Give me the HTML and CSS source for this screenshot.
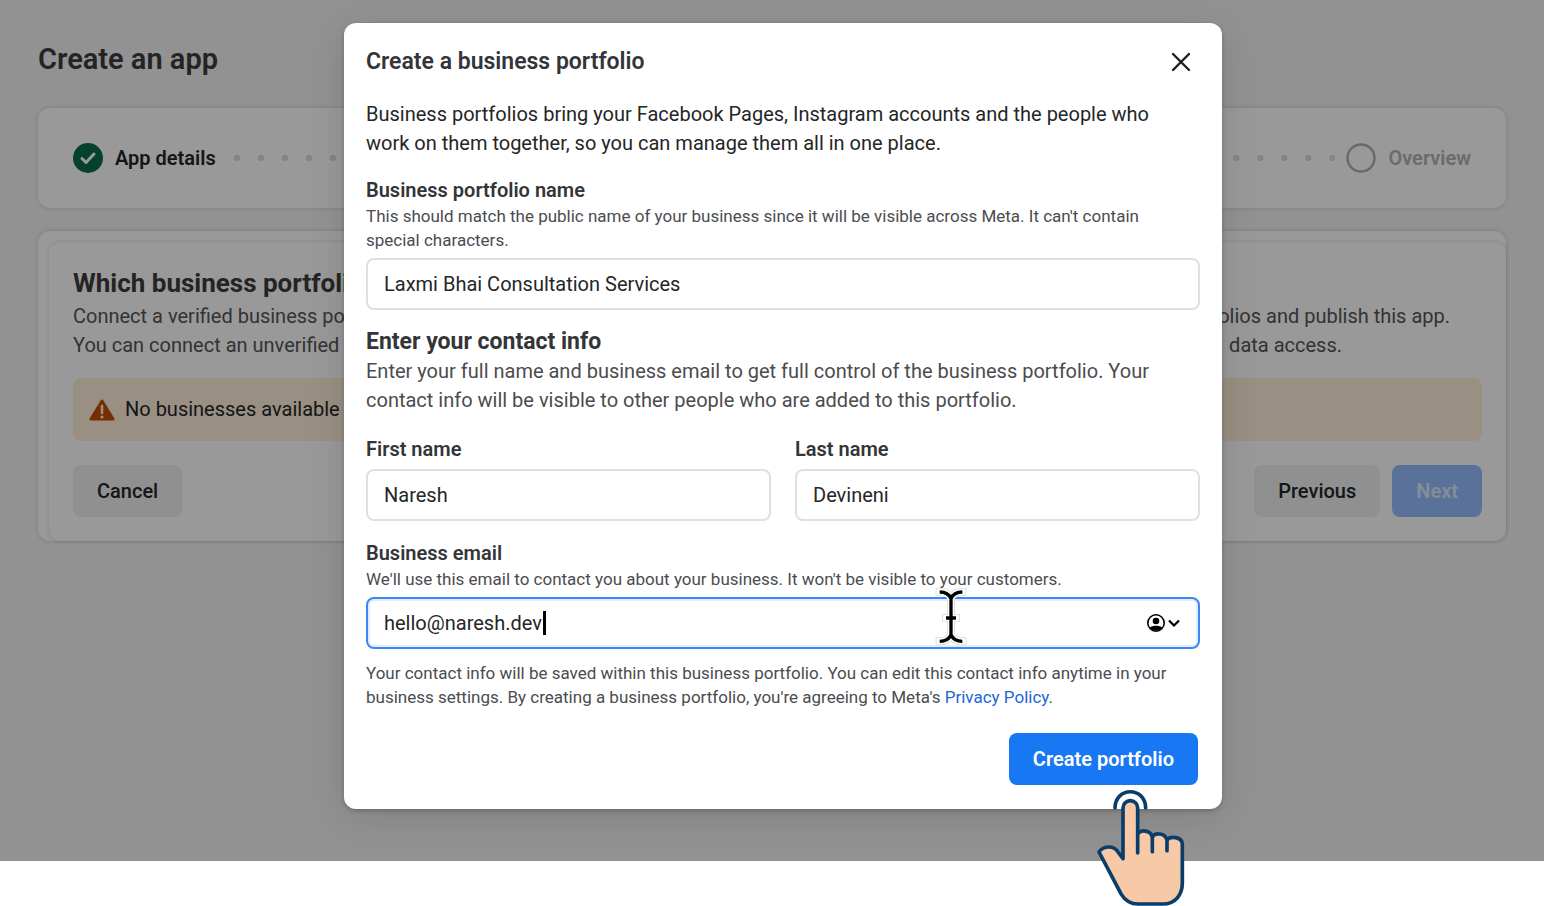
FILE: index.html
```html
<!DOCTYPE html>
<html lang="en">
<head>
    <meta charset="UTF-8" />
    <meta name="viewport" content="width=device-width, initial-scale=1.0"/>
    <title>Create an app</title>
    <link rel="stylesheet" href="styles.css">
</head>
<body>
<div class="stage">
    <main class="page">
        <h1>Create an app</h1>

        <div class="card steps">
            <div class="step">
                <svg width="30" height="30" viewBox="0 0 30 30" aria-hidden="true">
                    <circle cx="15" cy="15" r="15" fill="#0a6b4e"/>
                    <path d="M9 15.5l4 4 8-8.5" fill="none" stroke="#fff" stroke-width="3" stroke-linecap="round" stroke-linejoin="round"/>
                </svg>
                <span>App details</span>
            </div>
            <div class="dots"></div>
            <div class="step pending">
                <svg width="30" height="30" viewBox="0 0 30 30" aria-hidden="true">
                    <circle cx="15" cy="15" r="13.5" fill="none" stroke="#afafaf" stroke-width="2.4"/>
                </svg>
                <span>Overview</span>
            </div>
        </div>

        <div class="card outer">
            <section class="card inner">
                <h2>Which business portfolio</h2>
                <p class="line first"><span>Connect a verified business portfolio</span><span>portfolios and publish this app.</span></p>
                <p class="line second"><span>You can connect an unverified</span><span>data access.</span></p>
                <div class="banner">
                    <svg width="26" height="22" viewBox="0 0 26 22" aria-hidden="true">
                        <path d="M13 2L24 20H2z" fill="#c14e07" stroke="#c14e07" stroke-width="3" stroke-linejoin="round"/>
                        <path d="M13 7v7" stroke="#fff0da" stroke-width="2.6" stroke-linecap="round"/>
                        <circle cx="13" cy="18" r="1.6" fill="#fff0da"/>
                    </svg>
                    <span>No businesses available</span>
                </div>
                <div class="actions">
                    <button type="button" class="btn">Cancel</button>
                    <button type="button" class="btn push">Previous</button>
                    <button type="button" class="btn next">Next</button>
                </div>
            </section>
        </div>
    </main>

    <div class="overlay">
        <form class="dialog" role="dialog" aria-labelledby="dialogTitle">
            <header class="dialog-header">
                <h2 id="dialogTitle">Create a business portfolio</h2>
                <button type="button" class="close" aria-label="Close">
                    <svg width="20" height="20" viewBox="0 0 20 20"><path d="M2 2l16 16M18 2L2 18" stroke="#1c1e21" stroke-width="2.4" stroke-linecap="round"/></svg>
                </button>
            </header>

            <p class="intro">Business portfolios bring your Facebook Pages, Instagram accounts and the people who work on them together, so you can manage them all in one place.</p>

            <div class="form-group">
                <label for="portfolio">Business portfolio name</label>
                <p class="help">This should match the public name of your business since it will be visible across Meta. It can't contain special characters.</p>
                <input type="text" id="portfolio" value="Laxmi Bhai Consultation Services" />
            </div>

            <h3>Enter your contact info</h3>
            <p class="desc">Enter your full name and business email to get full control of the business portfolio. Your contact info will be visible to other people who are added to this portfolio.</p>

            <div class="names">
                <div class="form-group">
                    <label for="firstName">First name</label>
                    <input type="text" id="firstName" value="Naresh" />
                </div>
                <div class="form-group">
                    <label for="lastName">Last name</label>
                    <input type="text" id="lastName" value="Devineni" />
                </div>
            </div>

            <div class="form-group">
                <label for="email">Business email</label>
                <p class="help">We'll use this email to contact you about your business. It won't be visible to your customers.</p>
                <div class="email-field">
                    <input type="text" id="email" class="focused" value="hello@naresh.dev" />
                    <span class="caret"></span>
                    <button type="button" class="autofill" aria-label="Autofill contact">
                        <svg width="36" height="20" viewBox="0 0 36 20">
                            <circle cx="10" cy="10" r="8.2" fill="none" stroke="#000" stroke-width="1.6"/>
                            <circle cx="10" cy="8" r="3.3"/>
                            <path d="M3.8 14.8C6 12.2 14 12.2 16.2 14.8A8.2 8.2 0 0 1 3.8 14.8z"/>
                            <path d="M23 7.500l5 5 5-5" fill="none" stroke="#000" stroke-width="2.2"/>
                        </svg>
                    </button>
                    <svg class="ibeam" width="34" height="60" viewBox="102 24 102 180" aria-hidden="true">
                        <g fill="none" stroke-linejoin="round">
                            <path d="M119 36Q145 36 153 56Q161 36 187 36M153 56V164M119 184Q145 184 153 164Q161 184 187 184M138 114H168" stroke="#999" stroke-width="24" stroke-linecap="square" opacity=".35"/>
                            <path d="M119 36Q145 36 153 56Q161 36 187 36M153 56V164M119 184Q145 184 153 164Q161 184 187 184M138 114H168" stroke="#fff" stroke-width="19" stroke-linecap="square"/>
                            <path d="M119 36Q145 36 153 56Q161 36 187 36M153 56V164M119 184Q145 184 153 164Q161 184 187 184M138 114H168" stroke="#000" stroke-width="10"/>
                        </g>
                    </svg>
                </div>
            </div>

            <p class="help note">Your contact info will be saved within this business portfolio. You can edit this contact info anytime in your business settings. By creating a business portfolio, you're agreeing to Meta's <a href="#">Privacy Policy</a>.</p>

            <footer class="dialog-footer">
                <button type="button" class="btn primary">Create portfolio</button>
            </footer>

            <svg class="hand" width="90" height="117" viewBox="348 207 270 351" aria-hidden="true">
                <g stroke="#0b3d6b" stroke-width="11" stroke-linecap="round" stroke-linejoin="round">
                    <path d="M405 264C405 199 497 199 497 264" fill="none"/>
                    <path d="M429 416V264a22 22 0 0 1 44 0V342C482 328 511 330 517 350C525 337 555 338 561 360C570 347 607 350 607 373V490C607 526 584 552 549 552H474C450 552 435 541 424 523L357 396C371 376 402 376 414 396Z" fill="#f7c9a6"/>
                    <path d="M473 342V399M517 350V395M561 360V392" fill="none"/>
                </g>
            </svg>
        </form>
    </div>
</div>
</body>
</html>
```

FILE: styles.css
```css
:root {
    --text: #242628;
    --heading: #333538;
    --muted: #4b4c4f;
    --blue: #1877f2;
    --border: #e0e0e0;
}
* {
    box-sizing: border-box;
    margin: 0;
    padding: 0;
}
body {
    font-family: Roboto, Arial, sans-serif;
    font-size: 20px;
    line-height: 29px;
    color: var(--text);
    background: white;
    min-height: 100vh;
    display: flex;
    flex-direction: column;
    padding-bottom: 45px;
}
.stage {
    position: relative;
    flex: 1;
    background: #f3f3f3;
}
.page {
    padding: 42px 38px 24px;
}
h1 {
    font-size: 29px;
    line-height: 34px;
    font-weight: 600;
    color: #3c3c3c;
    margin-bottom: 32px;
}
.card {
    background: white;
    border-radius: 12px;
    box-shadow: 0 0 4px rgba(0, 0, 0, 0.15);
}
.steps {
    display: flex;
    align-items: center;
    height: 100px;
    padding: 0 35px;
    margin-bottom: 23px;
}
.step {
    display: flex;
    align-items: center;
    gap: 12px;
    font-weight: 600;
}
.pending {
    color: #b2b2b2;
}
.dots {
    flex: 1;
    display: flex;
    margin: 0 11px 0 9px;
}
.dots::before,
.dots::after {
    content: "";
    flex: 1;
    height: 6px;
    background: radial-gradient(circle, #dedede 3px, transparent 3px) left / 24px 6px repeat-x;
}
.dots::after {
    background-position: right -9px top;
}
.outer {
    padding: 11px 0 0 11px;
}
.inner {
    padding: 24px;
}
.inner h2 {
    font-size: 26px;
    line-height: 34px;
    font-weight: 700;
    color: #3c3c3c;
    margin-bottom: 2px;
}
.line {
    display: flex;
    justify-content: space-between;
    color: #555;
}
.line.first {
    padding-right: 32px;
}
.line.second {
    padding-right: 140px;
}
.banner {
    display: flex;
    align-items: center;
    gap: 10px;
    margin: 18px 0 24px;
    padding: 17px 16px;
    background: #fff0da;
    border-radius: 8px;
}
.actions {
    display: flex;
    gap: 12px;
}
.btn {
    height: 52px;
    padding: 0 24px;
    border: none;
    border-radius: 8px;
    background: #f0f0f0;
    color: var(--text);
    font: 500 20px/28px Roboto, Arial, sans-serif;
    cursor: pointer;
}
.push {
    margin-left: auto;
}
.next {
    background: #96beff;
    color: #dfe9ff;
    font-weight: 600;
}
.overlay {
    position: absolute;
    inset: 0;
    display: flex;
    justify-content: center;
    align-items: flex-start;
    padding: 23px 0 24px 22px;
    background: rgba(0, 0, 0, 0.4);
}
.dialog {
    position: relative;
    width: 100%;
    max-width: 878px;
    padding: 0 22px 24px;
    background: white;
    border-radius: 12px;
    box-shadow: 0 2px 4px rgba(0, 0, 0, 0.2), 0 8px 40px rgba(0, 0, 0, 0.12);
}
.dialog p {
    max-width: 810px;
}
.dialog-header {
    display: flex;
    align-items: center;
    justify-content: space-between;
    height: 77px;
}
.dialog-header h2 {
    font-size: 23px;
    line-height: 30px;
    font-weight: 600;
    color: var(--heading);
}
.close {
    display: flex;
    padding: 9px;
    border: none;
    background: none;
    cursor: pointer;
}
.intro {
    margin-bottom: 18px;
}
label {
    display: block;
    line-height: 28px;
    font-weight: 600;
    color: var(--heading);
}
.help {
    font-size: 17px;
    line-height: 24px;
    color: var(--muted);
}
input {
    display: block;
    width: 100%;
    height: 52px;
    margin-top: 6px;
    padding: 0 16px;
    border: 2px solid var(--border);
    border-radius: 8px;
    background: white;
    color: var(--text);
    font: 20px/28px Roboto, Arial, sans-serif;
    outline: none;
}
h3 {
    margin-top: 17px;
    font-size: 23px;
    line-height: 30px;
    font-weight: 700;
    color: var(--heading);
}
.desc {
    margin-bottom: 20px;
    color: var(--muted);
}
.names {
    display: grid;
    grid-template-columns: 1fr 1fr;
    gap: 24px;
    margin-bottom: 18px;
}
.email-field {
    position: relative;
}
.focused {
    border-color: #3b88f4;
    box-shadow: inset 0 0 0 2px #e3edfd;
}
.caret {
    position: absolute;
    left: 177px;
    top: 14px;
    width: 3px;
    height: 24px;
    background: black;
}
.autofill {
    position: absolute;
    right: 18px;
    top: 16px;
    display: flex;
    border: none;
    background: none;
    cursor: pointer;
}
.ibeam {
    position: absolute;
    left: 568px;
    top: -9px;
    overflow: visible;
}
.note {
    margin: 12px 0 24px;
}
a {
    color: #1c66d6;
    text-decoration: none;
}
.dialog-footer {
    display: flex;
    justify-content: flex-end;
    padding-right: 2px;
}
.primary {
    background: var(--blue);
    color: white;
    font-weight: 600;
}
.hand {
    position: absolute;
    right: 36px;
    bottom: -97px;
}
```
